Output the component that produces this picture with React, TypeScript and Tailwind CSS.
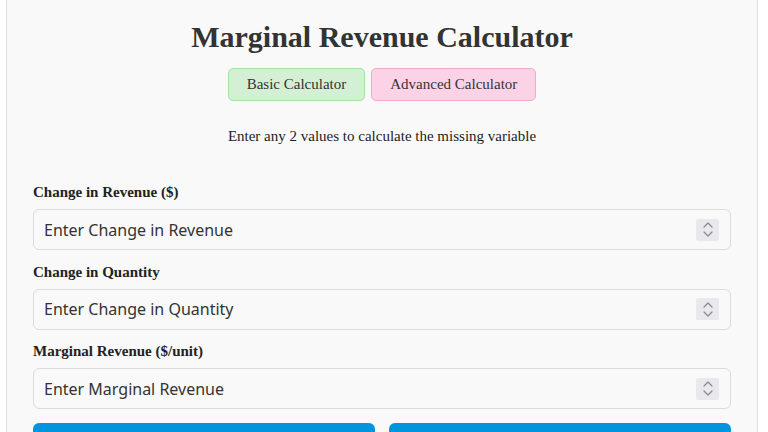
import React from "react";

const serif = { fontFamily: '"Liberation Serif", "Times New Roman", serif' };

const Spinner = () => (
  <div className="absolute right-[12px] top-1/2 -translate-y-1/2 w-[23px] h-[22px] bg-[#e9e9ed] rounded-[2px] flex flex-col items-center justify-center gap-[3px]">
    <svg width="10" height="6" viewBox="0 0 10 6" fill="none">
      <path d="M1 5L5 1L9 5" stroke="#8a8a95" strokeWidth="1.3" strokeLinecap="round" strokeLinejoin="round" />
    </svg>
    <svg width="10" height="6" viewBox="0 0 10 6" fill="none">
      <path d="M1 1L5 5L9 1" stroke="#8a8a95" strokeWidth="1.3" strokeLinecap="round" strokeLinejoin="round" />
    </svg>
  </div>
);

const Field = ({ label, placeholder }: { label: string; placeholder: string }) => (
  <div className="mb-[13.5px]">
    <label className="block text-[15px] leading-[17px] font-bold text-[#222] mb-[8px]" style={serif}>
      {label}
    </label>
    <div className="relative">
      <input
        type="text"
        placeholder={placeholder}
        className="w-full h-[41px] rounded-[6px] border border-[#dcdcdc] bg-[#f9f9f9] pl-[10px] pr-[44px] text-[16px] text-[#333] placeholder:text-[#333] outline-none"
        style={{ fontFamily: '"Noto Sans", "DejaVu Sans", sans-serif' }}
      />
      <Spinner />
    </div>
  </div>
);

export default function App() {
  return (
    <div className="min-h-[432px] bg-white overflow-hidden">
      <div className="ml-[6px] w-[752px] h-[432px] border-x border-[#e0e0e0] bg-[#f9f9f9] px-[26px] pt-[19px]">
        <h1 className="text-center text-[30px] leading-[36px] font-bold text-[#333]" style={serif}>
          Marginal Revenue Calculator
        </h1>
        <div className="flex justify-center gap-[6px] mt-[13px]">
          <button
            className="h-[33px] px-[18px] rounded-[5px] border border-[#a9dfa9] bg-[#d4f0d4] text-[15px] text-[#333]"
            style={serif}
          >
            Basic Calculator
          </button>
          <button
            className="h-[33px] px-[18px] rounded-[5px] border border-[#f5a9c8] bg-[#fcd3e6] text-[15px] text-[#333]"
            style={serif}
          >
            Advanced Calculator
          </button>
        </div>
        <p className="text-center text-[15px] leading-[18px] text-[#222] mt-[26px] mb-[39px]" style={serif}>
          Enter any 2 values to calculate the missing variable
        </p>
        <Field label="Change in Revenue ($)" placeholder="Enter Change in Revenue" />
        <Field label="Change in Quantity" placeholder="Enter Change in Quantity" />
        <Field label="Marginal Revenue ($/unit)" placeholder="Enter Marginal Revenue" />
        <div className="grid grid-cols-2 gap-[14px]">
          <button className="h-[44px] rounded-[6px] bg-[#0095dd]" />
          <button className="h-[44px] rounded-[6px] bg-[#0095dd]" />
        </div>
      </div>
    </div>
  );
}
